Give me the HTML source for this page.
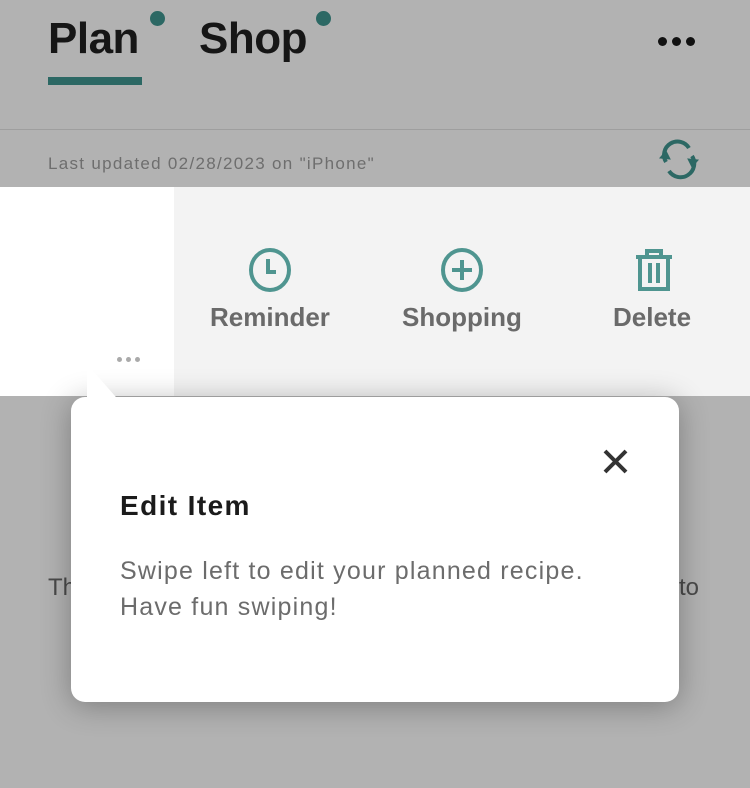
<!DOCTYPE html>
<html><head><style>
body{margin:0;width:750px;height:788px;background:#b2b2b2;position:relative;overflow:hidden;font-family:"Liberation Sans",sans-serif}
.a{position:absolute}
</style></head><body>
<div class="a" style="left:48px;top:14px;font-size:44px;font-weight:bold;color:#161616;letter-spacing:-0.5px">Plan</div>
<div class="a" style="left:199px;top:14px;font-size:44px;font-weight:bold;color:#161616;letter-spacing:-0.5px">Shop</div>
<div class="a" style="left:150px;top:11px;width:15px;height:15px;border-radius:50%;background:#2c6864"></div>
<div class="a" style="left:316px;top:11px;width:15px;height:15px;border-radius:50%;background:#2c6864"></div>
<div class="a" style="left:48px;top:77px;width:94px;height:8px;background:#2c6864"></div>
<div class="a" style="left:658px;top:37px;width:9px;height:9px;border-radius:50%;background:#111;box-shadow:14px 0 #111,28px 0 #111"></div>
<div class="a" style="left:0;top:129px;width:750px;height:1px;background:#9e9e9e"></div>
<div class="a" style="left:48px;top:154px;font-size:17px;color:#6e6e6e;letter-spacing:1.3px">Last updated 02/28/2023 on "iPhone"</div>
<svg class="a" style="left:656px;top:138px" width="46" height="42" viewBox="0 0 46 42" fill="none" stroke="#2c6864" stroke-width="4">
<path d="M10 24 A13 13 0 0 1 33 10"/><path d="M36 18 A13 13 0 0 1 13 33"/>
<path d="M4 20 L10 13 L14 21Z" fill="#2c6864" stroke-width="1"/><path d="M42 22 L36 29 L32 21Z" fill="#2c6864" stroke-width="1"/>
</svg>
<div class="a" style="left:0;top:187px;width:174px;height:209px;background:#fff"></div>
<div class="a" style="left:174px;top:187px;width:576px;height:209px;background:#f3f3f3"></div>
<div class="a" style="left:117px;top:357px;width:5px;height:5px;border-radius:50%;background:#aaa;box-shadow:9px 0 #aaa,18px 0 #aaa"></div>
<svg class="a" style="left:248px;top:247px" width="44" height="46" viewBox="0 0 44 46" fill="none" stroke="#4f9590" stroke-width="4"><ellipse cx="22" cy="23" rx="19" ry="20"/><path d="M20 12 V25 H28"/></svg>
<svg class="a" style="left:440px;top:247px" width="44" height="46" viewBox="0 0 44 46" fill="none" stroke="#4f9590" stroke-width="4"><ellipse cx="22" cy="23" rx="19" ry="20"/><path d="M22 13 V33 M12 23 H32"/></svg>
<svg class="a" style="left:634px;top:247px" width="40" height="46" viewBox="0 0 40 46" fill="none" stroke="#4f9590" stroke-width="4"><path d="M2 10 H38 M13 10 V4 H27 V10 M6 10 V42 H34 V10 M16 16 V36 M24 16 V36"/></svg>
<div class="a" style="left:210px;top:302px;font-size:26px;font-weight:bold;color:#6a6a6a">Reminder</div>
<div class="a" style="left:402px;top:302px;font-size:26px;font-weight:bold;color:#6a6a6a">Shopping</div>
<div class="a" style="left:613px;top:302px;font-size:26px;font-weight:bold;color:#6a6a6a">Delete</div>
<div class="a" style="left:48px;top:574px;font-size:24px;color:#4a4a4a">Th</div>
<div class="a" style="left:679px;top:574px;font-size:24px;color:#4a4a4a">to</div>
<div class="a" style="left:71px;top:397px;width:608px;height:305px;background:#fff;border-radius:14px;box-shadow:0 4px 30px rgba(0,0,0,.3)"></div>
<svg class="a" style="left:86px;top:364px" width="40" height="40"><path d="M1 0 L1 40 L36 40Z" fill="#fff"/></svg>
<svg class="a" style="left:602px;top:448px" width="27" height="27" stroke="#333" stroke-width="4"><path d="M3 3 L24 24 M24 3 L3 24"/></svg>
<div class="a" style="left:120px;top:490px;font-size:28px;font-weight:bold;color:#1b1b1b;letter-spacing:1.4px">Edit Item</div>
<div class="a" style="left:120px;top:553px;font-size:25px;line-height:36px;color:#6c6c6c;letter-spacing:1.2px">Swipe left to edit your planned recipe.<br>Have fun swiping!</div>
</body></html>
